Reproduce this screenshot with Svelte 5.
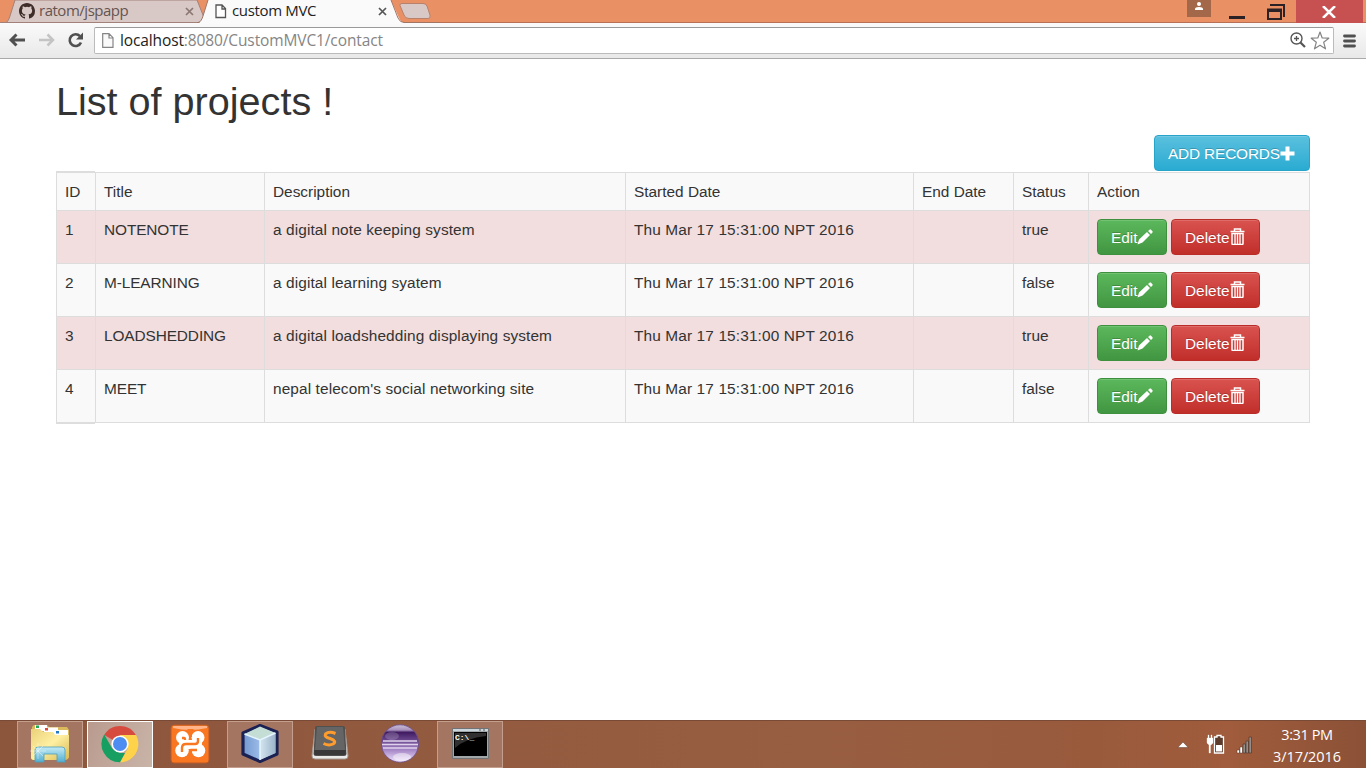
<script>
  const columns = ['ID', 'Title', 'Description', 'Started Date', 'End Date', 'Status', 'Action'];
  const started = 'Thu Mar 17 15:31:00 NPT 2016';
  const projects = [
    { id: 1, title: 'NOTENOTE', description: 'a digital note keeping system', status: true },
    { id: 2, title: 'M-LEARNING', description: 'a digital learning syatem', status: false },
    { id: 3, title: 'LOADSHEDDING', description: 'a digital loadshedding displaying system', status: true },
    { id: 4, title: 'MEET', description: "nepal telecom's social networking site", status: false }
  ];
</script>

<div class="screen">
  <header class="titlebar">
    <svg class="tabshapes" width="440" height="24" viewBox="0 0 440 24">
      <path d="M5 23 C8 22 9 19 10 16 L15 0 H197 L205 20 L207 23Z" fill="#d8c9c6" stroke="#a48178" />
      <path d="M0 22.5H200" stroke="#a48178" />
      <path d="M197 24 C201 23 202 19 203 16 L208 0 H391 L399 18 Q401 22.5 405 22.5 V24Z" fill="#fafafa" />
      <path d="M197 23 C201 22 202 19 203 16 L208 0 M391 0 L398 18 Q400 22.5 404 22.5 H440" fill="none" stroke="#a27464" />
      <path d="M402 3.500H423Q426 3.500 427 6L430 15Q431 18.500 428 18.500H409Q405 18.500 404 15L400 5.500Q399.500 3.500 402 3.500Z" fill="#d8c9c6" stroke="#b8816b" />
    </svg>
    <div class="tab first">
      <svg width="16" height="16" viewBox="0 0 16 16"><path fill="#3f2d29" d="M8 0C3.580 0 0 3.580 0 8c0 3.540 2.290 6.530 5.470 7.590.4.070.55-.17.55-.38 0-.19-.01-.82-.01-1.490-2.010.37-2.530-.49-2.690-.94-.09-.23-.48-.94-.82-1.130-.28-.15-.68-.52-.01-.53.63-.01 1.080.58 1.230.82.72 1.210 1.870.87 2.330.66.07-.52.28-.87.51-1.070-1.780-.2-3.640-.89-3.640-3.950 0-.87.31-1.590.82-2.150-.08-.2-.36-1.020.08-2.120 0 0 .67-.21 2.200.82a7.700 7.700 0 0 1 4 0c1.530-1.040 2.200-.82 2.200-.82.44 1.100.16 1.920.08 2.120.51.56.82 1.270.82 2.150 0 3.070-1.870 3.750-3.650 3.950.29.25.54.73.54 1.480 0 1.070-.01 1.930-.01 2.200 0 .21.15.46.55.38A8.010 8.010 0 0 0 16 8c0-4.420-3.580-8-8-8z" /></svg>
      <span>ratom/jspapp</span>
      <svg class="x" width="9" height="9" viewBox="0 0 9 9"><path d="M1 1L8 8M8 1L1 8" stroke="#8b7773" stroke-width="1.700" /></svg>
    </div>
    <div class="tab second">
      <svg width="12" height="15" viewBox="0 0 12 15"><path d="M1 1H7L10.500 4.500V13.500H1Z M7 1V5H10.500" fill="#fff" stroke="#555" stroke-width="1.300" /></svg>
      <span>custom MVC</span>
      <svg class="x" width="9" height="9" viewBox="0 0 9 9"><path d="M1 1L8 8M8 1L1 8" stroke="#555" stroke-width="1.700" /></svg>
    </div>
    <div class="controls">
      <span class="user"><svg width="10" height="9" viewBox="0 0 10 9"><circle cx="5" cy="2" r="2" fill="#fff" /><path d="M1 8V7Q1 5 5 5T9 7V8Z" fill="#fff" /></svg></span>
      <svg class="min" width="16" height="3"><path d="M0 0H16V3H0Z" fill="#2b2225" /></svg>
      <svg class="max" width="18" height="16" viewBox="0 0 18 16"><path d="M3 1H17V13M1 5.500H14V15H1Z" fill="none" stroke="#2b2225" stroke-width="2" /><path d="M0 5H15V8H0Z" fill="#2b2225" /></svg>
      <span class="close"><svg width="14" height="12" viewBox="0 0 14 12"><path d="M1 0L13 12M13 0L1 12" stroke="#fff" stroke-width="2.500" /></svg></span>
    </div>
  </header>

  <div class="toolbar">
    <svg class="nav" width="84" height="18" viewBox="0 0 84 18">
      <path d="M25 9H11M16.500 3.500L11 9L16.500 14.500" fill="none" stroke="#505050" stroke-width="2.900" />
      <path d="M39 9H53M47.500 3.500L53 9L47.500 14.500" fill="none" stroke="#c4c4c4" stroke-width="2.500" />
      <path d="M80 5.200A5.900 5.900 0 1 0 81 11.500" fill="none" stroke="#505050" stroke-width="2.600" /><path d="M83 1.500V8.500H76Z" fill="#505050" />
    </svg>
    <div class="address">
      <svg width="12" height="15" viewBox="0 0 12 15"><path d="M.7.7H7L11 4.700V14.300H.7ZM7 .7V5H11" fill="#fafafa" stroke="#858585" stroke-width="1.200" /></svg>
      <span class="url">localhost<i>:8080/CustomMVC1/contact</i></span>
      <svg class="lens" width="16" height="16" viewBox="0 0 16 16"><circle cx="6.500" cy="6.500" r="5.500" fill="#fff" stroke="#565656" stroke-width="1.400" /><path d="M4 6.500H9M6.500 4V9" stroke="#565656" stroke-width="1.300" /><path d="M10.500 10.500L15 15" stroke="#565656" stroke-width="2.200" /></svg>
      <svg class="star" width="20" height="19" viewBox="0 0 20 19"><path d="M10 1L12.200 7L18.800 7.200L13.700 11.300L15.500 17.800L10 14.200L4.500 17.800L6.300 11.300L1.200 7.200L7.800 7Z" fill="#fff" stroke="#858585" stroke-width="1.200" stroke-linejoin="round" /></svg>
    </div>
    <svg class="menu" width="13" height="14" viewBox="0 0 13 14"><path d="M1.500 2H11.500M1.500 7H11.500M1.500 12H11.500" stroke="#505050" stroke-width="2.800" stroke-linecap="round" /></svg>
  </div>

  <main>
    <h1>List of projects !</h1>
    <div class="actions"><button class="btn info"><span>ADD RECORDS</span><svg width="15" height="15" viewBox="0 0 15 15"><path d="M5.500 .5H9.500V5.500H14.500V9.500H9.500V14.500H5.500V9.500H.5V5.500H5.500Z" fill="#fff" /></svg></button></div>
    <div class="table">
      <div class="row head">{#each columns as name}<div>{name}</div>{/each}</div>
      {#each projects as p}
        <div class="row" class:danger={p.status}>
          <div>{p.id}</div><div class="title">{p.title}</div><div class="description">{p.description}</div><div class="date">{started}</div><div></div><div>{p.status}</div>
          <div class="buttons">
            <button class="btn success"><span>Edit</span><svg class="pencil" width="17" height="16" viewBox="0 0 17 16"><path d="M.5 15.500L2 10.500L10 3L13 6L5.500 13.500ZM11 2L12.500.7Q13.300 0 14 .7L15.500 2.200Q16 3 15.300 3.700L14 5Z" fill="#fff" /></svg></button>
            <button class="btn delete"><span>Delete</span><svg class="bin" width="15" height="17" viewBox="0 0 15 17"><path d="M4.500 3V1H10.500V3M.5 3.500H14.500" fill="none" stroke="#fff" stroke-width="1.500" /><path d="M2 5.500H13V15.500Q13 16.500 12 16.500H3Q2 16.500 2 15.500Z" fill="none" stroke="#fff" stroke-width="1.500" /><path d="M5 6V16M7.500 6V16M10 6V16" stroke="#fff" stroke-width="1.300" /></svg></button>
          </div>
        </div>
      {/each}
    </div>
  </main>

  <footer>
    <div class="apps">
      <div class="app open">
        <svg width="40" height="40" viewBox="0 0 40 40"><defs><linearGradient id="folder" x2="1" y2="1"><stop stop-color="#ead07a" /><stop offset=".5" stop-color="#fff0a2" /><stop offset="1" stop-color="#d8b851" /></linearGradient><linearGradient id="stand" x2="0" y2="1"><stop stop-color="#c5ebf5" /><stop offset="1" stop-color="#52aed1" /></linearGradient></defs>
          <path d="M2 3L4 1H17L19 3H37L39 6V33Q38 36 34 36H4Q1 36 1 33Z" fill="#d9b95c" /><path d="M5 1H17V7H5Z" fill="#fff" /><path d="M6 1.500H9V4H6Z" fill="#22a955" /><path d="M14 3.500H28V9H14Z" fill="#fff" /><path d="M15 4H18V6.500H15Z" fill="#e24835" /><path d="M24 6H38V11H24Z" fill="#fff" /><path d="M26 7H29V9.500H26Z" fill="#247bc4" /><path d="M1 5H10L13 8H23L25 11H39V33Q38 36 34 36H4Q1 36 1 33Z" fill="url(#folder)" /><path d="M5 38V26Q5 23 8 23H32Q35 23 35 26V38H27V30H14V38Z" fill="url(#stand)" stroke="#4c9fbc" stroke-width=".8" /><path d="M8 19V35M0 27H16M3 22L13 32M13 22L3 32" stroke="#fff" stroke-opacity=".4" /></svg>
      </div>
      <div class="app open active">
        <svg width="38" height="38" viewBox="0 0 38 38"><path d="M19 19L3.200 10A18.300 18.300 0 0 1 34.800 10Z" fill="#d74b3f" /><path d="M19 10H35A18.300 18.300 0 0 1 19 37.300L26.800 23.500Z" fill="#ffd24c" /><path d="M3.200 9.500L11.200 23.500L19 28L24 28L19 37.300A18.300 18.300 0 0 1 3.200 9.500Z" fill="#169f61" /><circle cx="19" cy="19" r="8.600" fill="#fff" /><circle cx="19" cy="19" r="7" fill="#4d8cf0" /></svg>
      </div>
      <div class="app">
        <svg width="40" height="40" viewBox="0 0 40 40"><rect x="1" y="1" width="38" height="38" rx="3" fill="#fa7721" stroke="#ba5a28" /><path d="M3 2H37V4Q20 8 3 4Z" fill="#ffb48a" /><g fill="#fff"><circle cx="12.500" cy="13.500" r="6.500" /><circle cx="28" cy="13.500" r="6.500" /><circle cx="12" cy="26.500" r="6.800" /><circle cx="28.500" cy="26.500" r="6.800" /><path d="M9 16H32V25H9Z" /></g><path d="M17 5L20.500 9L24 5ZM17 34L20.500 30L24 34Z" fill="#fa7721" /><path d="M20.500 10V13M20.500 27V30" stroke="#fa7721" stroke-width="3" /><path d="M12 14H14Q15 14 15 16M12 28V24Q12 20 16 20H25Q28 20 28 17V14M20.500 26H27" fill="none" stroke="#fa7721" stroke-width="2.400" /></svg>
      </div>
      <div class="app open">
        <svg width="40" height="41" viewBox="0 0 40 41"><defs><linearGradient id="cube" x2="1"><stop stop-color="#7298d0" /><stop offset="1" stop-color="#c7dfff" /></linearGradient><linearGradient id="side" x2="1"><stop stop-color="#d4e6ef" /><stop offset="1" stop-color="#9bb3ca" /></linearGradient></defs><path d="M20 2.500L37 9V31L20 38.500L3 31V10Z" fill="url(#cube)" stroke="#1b2153" stroke-width="3.200" stroke-linejoin="round" /><path d="M20 3.500L35.500 10L20 17L4.500 11Z" fill="#c4ddd5" /><path d="M20 17L35.500 10V30L20 37Z" fill="url(#side)" /><path d="M4.500 11L20 17L35.500 10M20 17V37" stroke="#e5f5ff" stroke-width="1.500" fill="none" /></svg>
      </div>
      <div class="app">
        <svg class="editor" width="38" height="36" viewBox="0 0 38 36"><path d="M4 4H34L37 31Q37 34 34 34H4Q1 34 1 31Z" fill="#e9e9e7" stroke="#a59a93" /><path d="M6 1H32Q34 1 34 3L35.500 29Q35.500 31 33 31H5Q2.500 31 2.500 29L4 3Q4 1 6 1Z" fill="#505050" /><path d="M6 2H32L34 25H4Z" fill="#656565" /><path d="M3 25H35L34.500 30H3.500Z" fill="#383838" /><path d="M24.500 8.500Q18 6 14.500 9Q13 12 19 13.500Q26.500 16 22 19Q18 21 12.500 18.500" fill="none" stroke="#ff9c2e" stroke-width="3" /></svg>
      </div>
      <div class="app">
        <svg width="40" height="40" viewBox="0 0 40 40"><defs><linearGradient id="orb" x2="0" y2="1"><stop stop-color="#cbc0d8" /><stop offset=".14" stop-color="#a891bd" /><stop offset=".2" stop-color="#3f1a61" /><stop offset=".4" stop-color="#68458a" /><stop offset=".65" stop-color="#a080c2" /><stop offset="1" stop-color="#f2e6ff" /></linearGradient></defs><circle cx="20" cy="19.500" r="18.700" fill="url(#orb)" stroke="#6b4c8c" stroke-width=".8" /><path d="M3 17H37M2 20.500H38M3 24H37" stroke="#dfd2ed" stroke-width="1.300" /><ellipse cx="12" cy="12" rx="7" ry="4" fill="#fff" opacity=".18" /><ellipse cx="22" cy="33" rx="9" ry="4" fill="#fff" opacity=".45" /></svg>
      </div>
      <div class="app open">
        <svg width="37" height="31" viewBox="0 0 37 31"><path d="M.5.5H36.500V30.500H.5Z" fill="#a1a6a8" stroke="#707273" /><path d="M1 1H36V3H1Z" fill="#cbd5dc" /><path d="M2 4H35V28H2Z" fill="#000" /><path d="M3 5H34V8Q14 10 3 20Z" fill="#303030" /><text x="3" y="12" font-size="8">C:\_</text><path d="M27 2H29M31 2H33" stroke="#555" /></svg>
      </div>
    </div>
    <div class="tray">
      <svg class="caret" width="12" height="8" viewBox="0 0 12 8"><path d="M.8 6.500L6 1L11.200 6.500Z" fill="#fff" stroke="#583b30" stroke-width=".5" /></svg>
      <svg class="battery" width="20" height="21" viewBox="0 0 20 21"><path d="M8.500 3H11V1.500H15V3H17.500V19H8.500Z" fill="#5d3b2c" stroke="#fff" stroke-width="1.300" /><path d="M10 11H16V17.500H10Z" fill="#fff" /><path d="M2 1H3V4H5V1H6V4H7V9L5 11H4.500V19H3V11L1 9V4H2Z" fill="#fff" stroke="#fff" stroke-width=".3" /></svg>
      <svg class="signal" width="17" height="18" viewBox="0 0 17 18"><path d="M1 14H3.500V17H1ZM4 11H6.500V17H4Z" fill="#fff" stroke="#563526" stroke-width=".5" /><path d="M7 8H9.500V17H7ZM10 5H12.500V17H10ZM13 1H15.500V17H13Z" fill="#948e8b" stroke="#50372d" stroke-width=".7" /></svg>
      <div class="clock"><span>3:31 PM</span><span class="day">3/17/2016</span></div>
    </div>
  </footer>
</div>

<style>
  :global(body) { margin: 0; overflow: hidden; }
  * { box-sizing: border-box; }
  .screen { width: 1366px; height: 768px; display: flex; flex-direction: column; background: #fff; color: #333; font-family: "Liberation Sans", sans-serif; }
  svg { display: block; flex: none; }
  .titlebar { height: 23px; background: #e99065; display: flex; position: relative; border-bottom: 1px solid #b77055; font: 15px/20px "Open Sans", sans-serif; }
  .tabshapes { position: absolute; left: 0; top: 0; }
  .tab { position: relative; height: 22px; display: flex; align-items: center; }
  .tab span { height: 22px; }
  .first { width: 208px; padding-left: 19px; gap: 4px; color: #655451; letter-spacing: -.48px; }
  .second { width: 194px; padding-left: 7px; gap: 5px; color: #222; letter-spacing: -.35px; }
  .tab .x { margin-left: auto; margin-right: 14px; }
  .second .x { margin-right: 15px; }
  .controls { margin-left: auto; display: flex; height: 22px; }
  .user { width: 24px; height: 17px; background: #a36849; display: flex; justify-content: center; padding-top: 2px; margin-right: 18px; }
  .min { margin-top: 16px; }
  .max { margin: 4px 11px 0 22px; }
  .close { width: 67px; height: 23px; margin-right: 3px; background: #c75050; display: flex; justify-content: center; padding: 6px 2px 0 0; }
  .toolbar { height: 36px; display: flex; align-items: flex-start; background: linear-gradient(#fafafa, #e9e9e9); border-bottom: 1px solid #aaa; padding-top: 4px; position: relative; }
  .nav { margin: 4px 10px 0 0; }
  .address { width: 1240px; height: 27px; border: 1px solid #bbb; border-top-color: #999; border-radius: 2px; background: #fff; display: flex; align-items: center; padding: 0 3px 0 7px; }
  .url { font: 15.500px/25px "Open Sans", sans-serif; letter-spacing: -.12px; color: #222; margin-left: 6px; }
  .url i { font-style: normal; color: #858585; }
  .lens { margin-left: auto; margin-top: -2px; }
  .star { margin-left: 4px; }
  .menu { margin: 7px 0 0 9px; }
  main { height: 661px; padding: 21px 56px 0; font-size: 15.400px; line-height: 22px; }
  h1 { margin: 0; height: 55px; font-size: 39.600px; line-height: 43px; font-weight: 500; }
  .actions { display: flex; justify-content: flex-end; height: 36px; }
  .btn { height: 36px; border: 1px solid; border-radius: 4px; padding: 1px 13px 0; font: 15.400px/22px "Liberation Sans", sans-serif; color: #fff; display: flex; align-items: center; white-space: nowrap; text-shadow: 0 -1px 0 rgba(0,0,0,.2); box-shadow: inset 0 1px 0 rgba(255,255,255,.15); }
  .info { width: 156px; background: linear-gradient(#5bc0de, #2aabd2); border-color: #28a4c9; letter-spacing: -.17px; }
  .success { width: 70px; background: linear-gradient(#5cb85c, #419641); border-color: #3e8f3e; }
  .delete { width: 89px; background: linear-gradient(#d9534f, #c12e2a); border-color: #b92c28; }
  .info span, .success span, .delete span { padding-top: 1px; }
  .pencil { margin: -2px 0 0 -1px; }
  .bin { margin-top: -3px; }
  .table { width: 1254px; margin-top: 1px; border-bottom: 1px solid #ddd; position: relative; }
  .table::before, .table::after { content: ""; position: absolute; left: 0; width: 39px; height: 1px; background: #ddd; top: -1px; }
  .table::after { top: auto; bottom: -2px; }
  .row { display: grid; grid-template-columns: 39px 169px 361px 288px 100px 75px 222px; height: 53px; background: #f9f9f9; border-top: 1px solid #ddd; }
  .row > div { padding: 8px; border-left: 1px solid #ddd; white-space: nowrap; }
  .row > div:last-child { border-right: 1px solid #ddd; }
  .row.head { height: 38px; }
  .danger { background: #f2dede; }
  .title { letter-spacing: -.1px; }
  .description { letter-spacing: .11px; }
  .date { letter-spacing: .13px; }
  .buttons { display: flex; gap: 4px; }
  footer { height: 48px; display: flex; justify-content: space-between; background: linear-gradient(90deg, #8c563d, #985e41 60%, #995a3c 80%, #a05c3c 90%, #8b5137); border-top: 1px solid #794a35; }
  .apps { display: flex; gap: 4px; padding-left: 17px; }
  .app { width: 66px; height: 47px; display: flex; align-items: center; justify-content: center; padding-bottom: 2px; }
  .editor { margin-top: -2px; }
  .open { background: #a47662; border: 1px solid #c49f8e; }
  .active { background: linear-gradient(110deg, #b99b8e, #c9b4a8); border-color: #fff; }
  text { fill: #fff; font-family: "Liberation Mono", monospace; font-weight: bold; }
  .tray { display: flex; align-items: center; padding-right: 24px; }
  .caret { margin-right: 17px; }
  .battery { margin-right: 10px; }
  .signal { margin-right: 19px; }
  .clock { width: 70px; display: flex; flex-direction: column; align-items: center; font: 14.500px/22px "Open Sans", sans-serif; letter-spacing: -.4px; color: #fff; padding-top: 3px; white-space: nowrap; }
  .day { letter-spacing: -.1px; }
</style>
